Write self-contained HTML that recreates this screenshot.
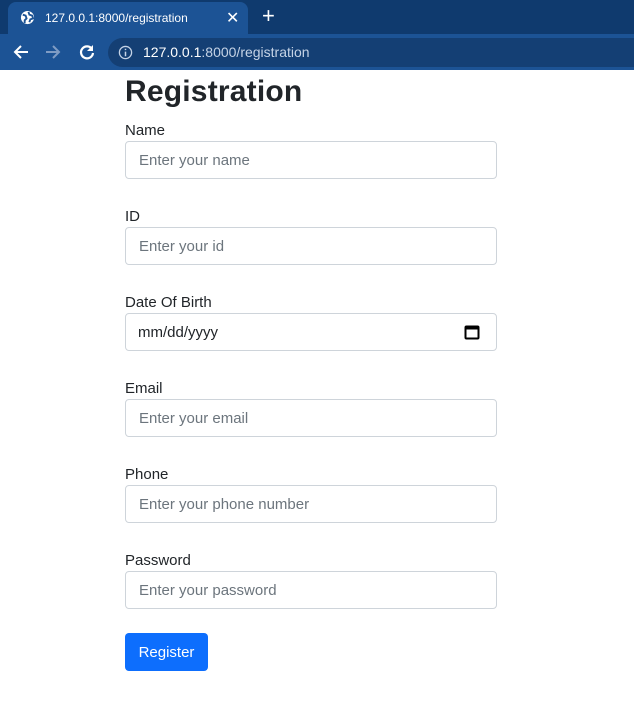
<!DOCTYPE html><html><head><style>
body{margin:0;width:634px;height:721px;background:#fff;font-family:"Liberation Sans",sans-serif;position:relative;overflow:hidden;color:#212529}
.top{position:absolute;left:0;top:0;width:634px;height:34px;background:#0f3a6e}
.tab{position:absolute;left:8px;top:2px;width:240px;height:34px;background:#1c5395;border-radius:8px 8px 0 0;color:#fff;font-size:12px}
.bar{position:absolute;left:0;top:34px;width:634px;height:36px;background:#1c5395}
.omni{position:absolute;left:108px;top:38px;width:540px;height:29px;background:#143f74;border-radius:15px;color:#c5d3e6;font-size:14px}
h1{position:absolute;left:125px;top:75px;margin:0;font-size:30px;font-weight:bold;color:#212529;letter-spacing:0.2px}
.l{position:absolute;left:125px;font-size:15px}
.i{position:absolute;left:125px;width:370px;height:36px;border:1px solid #ced4da;border-radius:4px;font-size:15px;color:#6c757d;line-height:38px;text-indent:13px}
.btn{position:absolute;left:125px;top:633px;width:83px;height:38px;background:#0d6efd;border-radius:4px;color:#fff;font-size:15px;text-align:center;line-height:40px}
</style></head><body>
<div class="top"></div>
<div class="tab"><svg style="position:absolute;left:12px;top:8px" width="15" height="15" viewBox="0 0 16 16"><circle cx="8" cy="8" r="7" fill="#fff"/><path d="M3 5l3 1 1 3-2 2v3M9 2l1 3 3 1 1 3-3 1-1 3" stroke="#1c5395" stroke-width="2" fill="none"/></svg><span style="position:absolute;left:37px;top:9px">127.0.0.1:8000/registration</span><span style="position:absolute;left:218px;top:6px;font-size:16px">✕</span></div>
<span style="position:absolute;left:262px;top:3px;color:#fff;font-size:22px">+</span>
<div class="bar"></div>
<svg style="position:absolute;left:12px;top:43px" width="18" height="18" viewBox="0 0 18 18"><path d="M16 9H3M9 3L3 9l6 6" stroke="#fff" stroke-width="2" fill="none"/></svg>
<svg style="position:absolute;left:44px;top:43px" width="18" height="18" viewBox="0 0 18 18"><path d="M2 9h13M9 3l6 6-6 6" stroke="#7f9cc4" stroke-width="2" fill="none"/></svg>
<svg style="position:absolute;left:78px;top:43px" width="18" height="18" viewBox="0 0 18 18"><path d="M14 6A6 6 0 1 0 15 10" stroke="#fff" stroke-width="2.2" fill="none"/><path d="M15 2v6h-6z" fill="#fff"/></svg>
<div class="omni"><svg style="position:absolute;left:10px;top:7px" width="15" height="15" viewBox="0 0 16 16"><circle cx="8" cy="8" r="6.5" stroke="#c5d3e6" stroke-width="1.4" fill="none"/><path d="M8 7v5M8 4v1.5" stroke="#c5d3e6" stroke-width="1.6"/></svg><span style="position:absolute;left:35px;top:6px"><span style="color:#fff">127.0.0.1</span>:8000/registration</span></div>
<h1>Registration</h1>
<div class="l" style="top:122px">Name</div><div class="i" style="top:141px">Enter your name</div>
<div class="l" style="top:208px">ID</div><div class="i" style="top:227px">Enter your id</div>
<div class="l" style="top:294px">Date Of Birth</div><div class="i" style="top:313px;color:#212529;text-indent:12px">mm/dd/yyyy<svg style="position:absolute;left:338px;top:10px" width="16" height="16" viewBox="0 0 16 16"><rect x="1.5" y="2.5" width="13" height="12" rx="1" stroke="#000" stroke-width="2" fill="none"/><rect x="1.5" y="2.5" width="13" height="3" fill="#000"/></svg></div>
<div class="l" style="top:380px">Email</div><div class="i" style="top:399px">Enter your email</div>
<div class="l" style="top:466px">Phone</div><div class="i" style="top:485px">Enter your phone number</div>
<div class="l" style="top:552px">Password</div><div class="i" style="top:571px">Enter your password</div>
<div class="btn">Register</div>
</body></html>
